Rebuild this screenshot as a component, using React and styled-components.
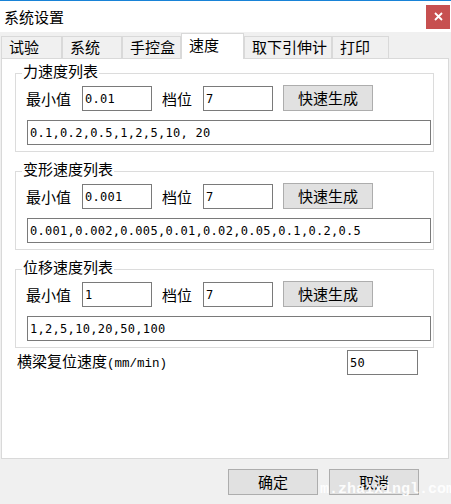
import React from "react";
import styled, { createGlobalStyle } from "styled-components";

const GlobalStyle = createGlobalStyle`
  html, body {
    margin: 0;
    padding: 0;
  }
  body {
    width: 451px;
    height: 504px;
    overflow: hidden;
    background: #f0f0f0;
    font-family: "Noto Sans CJK SC", "Noto Sans", sans-serif;
    color: #000;
  }
`;

// Dialog frame
const Window = styled.div`
  position: relative;
  width: 451px;
  height: 504px;
  box-sizing: border-box;
  border-top: 1px solid #1883d7;
  background: #f0f0f0;
  display: flex;
  flex-direction: column;
`;

const TitleBar = styled.div`
  height: 31px;
  background: #fff;
  display: flex;
  align-items: center;
  justify-content: space-between;
  padding: 0 1px 0 4px;
`;

const Title = styled.span`
  font-size: 15px;
  line-height: 16px;
`;

const CloseButton = styled.div`
  width: 24px;
  height: 24px;
  background: #c75050;
  display: flex;
  align-items: center;
  justify-content: center;
`;

// Tabs
const TabStrip = styled.div`
  height: 26px;
  display: flex;
  align-items: flex-end;
  padding-left: 1px;
`;

const Tab = styled.div`
  box-sizing: border-box;
  width: ${(p) => p.$w}px;
  height: ${(p) => (p.$active ? 26 : 22)}px;
  margin-bottom: ${(p) => (p.$active ? -1 : 0)}px;
  position: relative;
  z-index: ${(p) => (p.$active ? 1 : 0)};
  border: 1px solid #d9d9d9;
  border-bottom: none;
  background: ${(p) => (p.$active ? "#fff" : "#f0f0f0")};
  padding-left: 7px;
  font-size: 15px;
  line-height: ${(p) => (p.$active ? 21 : 20)}px;
  white-space: nowrap;
`;

const Panel = styled.div`
  box-sizing: border-box;
  height: 401px;
  margin: 0 2px 0 1px;
  background: #fff;
  border: 1px solid #d9d9d9;
  padding: 4px 14px 0 13px;
  display: flex;
  flex-direction: column;
`;

// Group boxes
const Group = styled.fieldset`
  margin: 0;
  padding: 2px 0 6px 0;
  border: 1px solid #dcdcdc;
  min-width: 0;

  & + & {
    margin-top: 9px;
  }
`;

const Legend = styled.legend`
  margin-left: 6px;
  padding: 0 1px 4px;
  font-size: 15px;
  line-height: 16px;
`;

const Row = styled.div`
  display: flex;
  align-items: flex-end;
  padding-left: 10px;
  height: 26px;
`;

const FieldLabel = styled.span`
  width: ${(p) => p.$w}px;
  margin-left: ${(p) => p.$ml || 0}px;
  font-size: 15px;
  line-height: 25px;
  white-space: nowrap;
`;

const TextBox = styled.input`
  box-sizing: border-box;
  width: ${(p) => p.$w}px;
  height: 25px;
  margin: 0;
  border: 1px solid #7a7a7a;
  background: #fff;
  padding: 0 2px;
  font-family: "DejaVu Sans Mono", "Liberation Mono", monospace;
  font-size: 12px;
  letter-spacing: 0.3px;
  color: #000;
  outline: none;
`;

const ListBox = styled(TextBox)`
  margin: 9px 0 0 11px;
`;

const Button = styled.button`
  box-sizing: border-box;
  width: 90px;
  height: 26px;
  margin: 0 0 0 ${(p) => p.$ml || 0}px;
  padding: 0;
  background: #e1e1e1;
  border: 1px solid #adadad;
  font-family: "Noto Sans CJK SC", sans-serif;
  font-size: 15px;
  line-height: 22px;
  color: #000;
`;

const BeamRow = styled.div`
  display: flex;
  align-items: center;
  margin-top: 2px;
  padding-left: 2px;
`;

const BeamLabel = styled.span`
  width: 330px;
  font-size: 15px;
  line-height: 20px;
`;

const Unit = styled.span`
  font-family: "Liberation Mono", monospace;
  font-size: 12.5px;
`;

const Footer = styled.div`
  display: flex;
  justify-content: flex-end;
  gap: 11px;
  padding: 10px 32px 0 0;
`;

const Watermark = styled.div`
  position: absolute;
  left: 320px;
  top: 480px;
  font-family: "Liberation Mono", monospace;
  font-weight: bold;
  font-size: 15px;
  color: rgba(255, 255, 255, 0.92);
  white-space: nowrap;
`;

const tabs = [
  { name: "试验", w: 61 },
  { name: "系统", w: 60 },
  { name: "手控盒", w: 59 },
  { name: "速度", w: 63, active: true },
  { name: "取下引伸计", w: 88 },
  { name: "打印", w: 57 },
];

const groups = [
  { title: "力速度列表", min: "0.01", step: "7", list: "0.1,0.2,0.5,1,2,5,10, 20" },
  { title: "变形速度列表", min: "0.001", step: "7", list: "0.001,0.002,0.005,0.01,0.02,0.05,0.1,0.2,0.5" },
  { title: "位移速度列表", min: "1", step: "7", list: "1,2,5,10,20,50,100" },
];

const SpeedGroup = ({ title, min, step, list }) => (
  <Group>
    <Legend>{title}</Legend>
    <Row>
      <FieldLabel $w={56}>最小值</FieldLabel>
      <TextBox $w={70} defaultValue={min} readOnly />
      <FieldLabel $w={41} $ml={10}>档位</FieldLabel>
      <TextBox $w={70} defaultValue={step} readOnly />
      <Button $ml={10}>快速生成</Button>
    </Row>
    <ListBox $w={404} defaultValue={list} readOnly />
  </Group>
);

const App = () => (
  <>
    <GlobalStyle />
    <Window>
      <TitleBar>
        <Title>系统设置</Title>
        <CloseButton>
          <svg width="9" height="9" viewBox="0 0 9 9">
            <path d="M1 1L8 8M8 1L1 8" stroke="#fff" strokeWidth="1.8" />
          </svg>
        </CloseButton>
      </TitleBar>
      <TabStrip>
        {tabs.map((t) => (
          <Tab key={t.name} $w={t.w} $active={t.active}>
            {t.name}
          </Tab>
        ))}
      </TabStrip>
      <Panel>
        {groups.map((g) => (
          <SpeedGroup key={g.title} {...g} />
        ))}
        <BeamRow>
          <BeamLabel>
            横梁复位速度<Unit>(mm/min)</Unit>
          </BeamLabel>
          <TextBox $w={71} defaultValue="50" readOnly />
        </BeamRow>
      </Panel>
      <Footer>
        <Button>确定</Button>
        <Button>取消</Button>
      </Footer>
      <Watermark>m.zhaixingl.com</Watermark>
    </Window>
  </>
);

export default App;
